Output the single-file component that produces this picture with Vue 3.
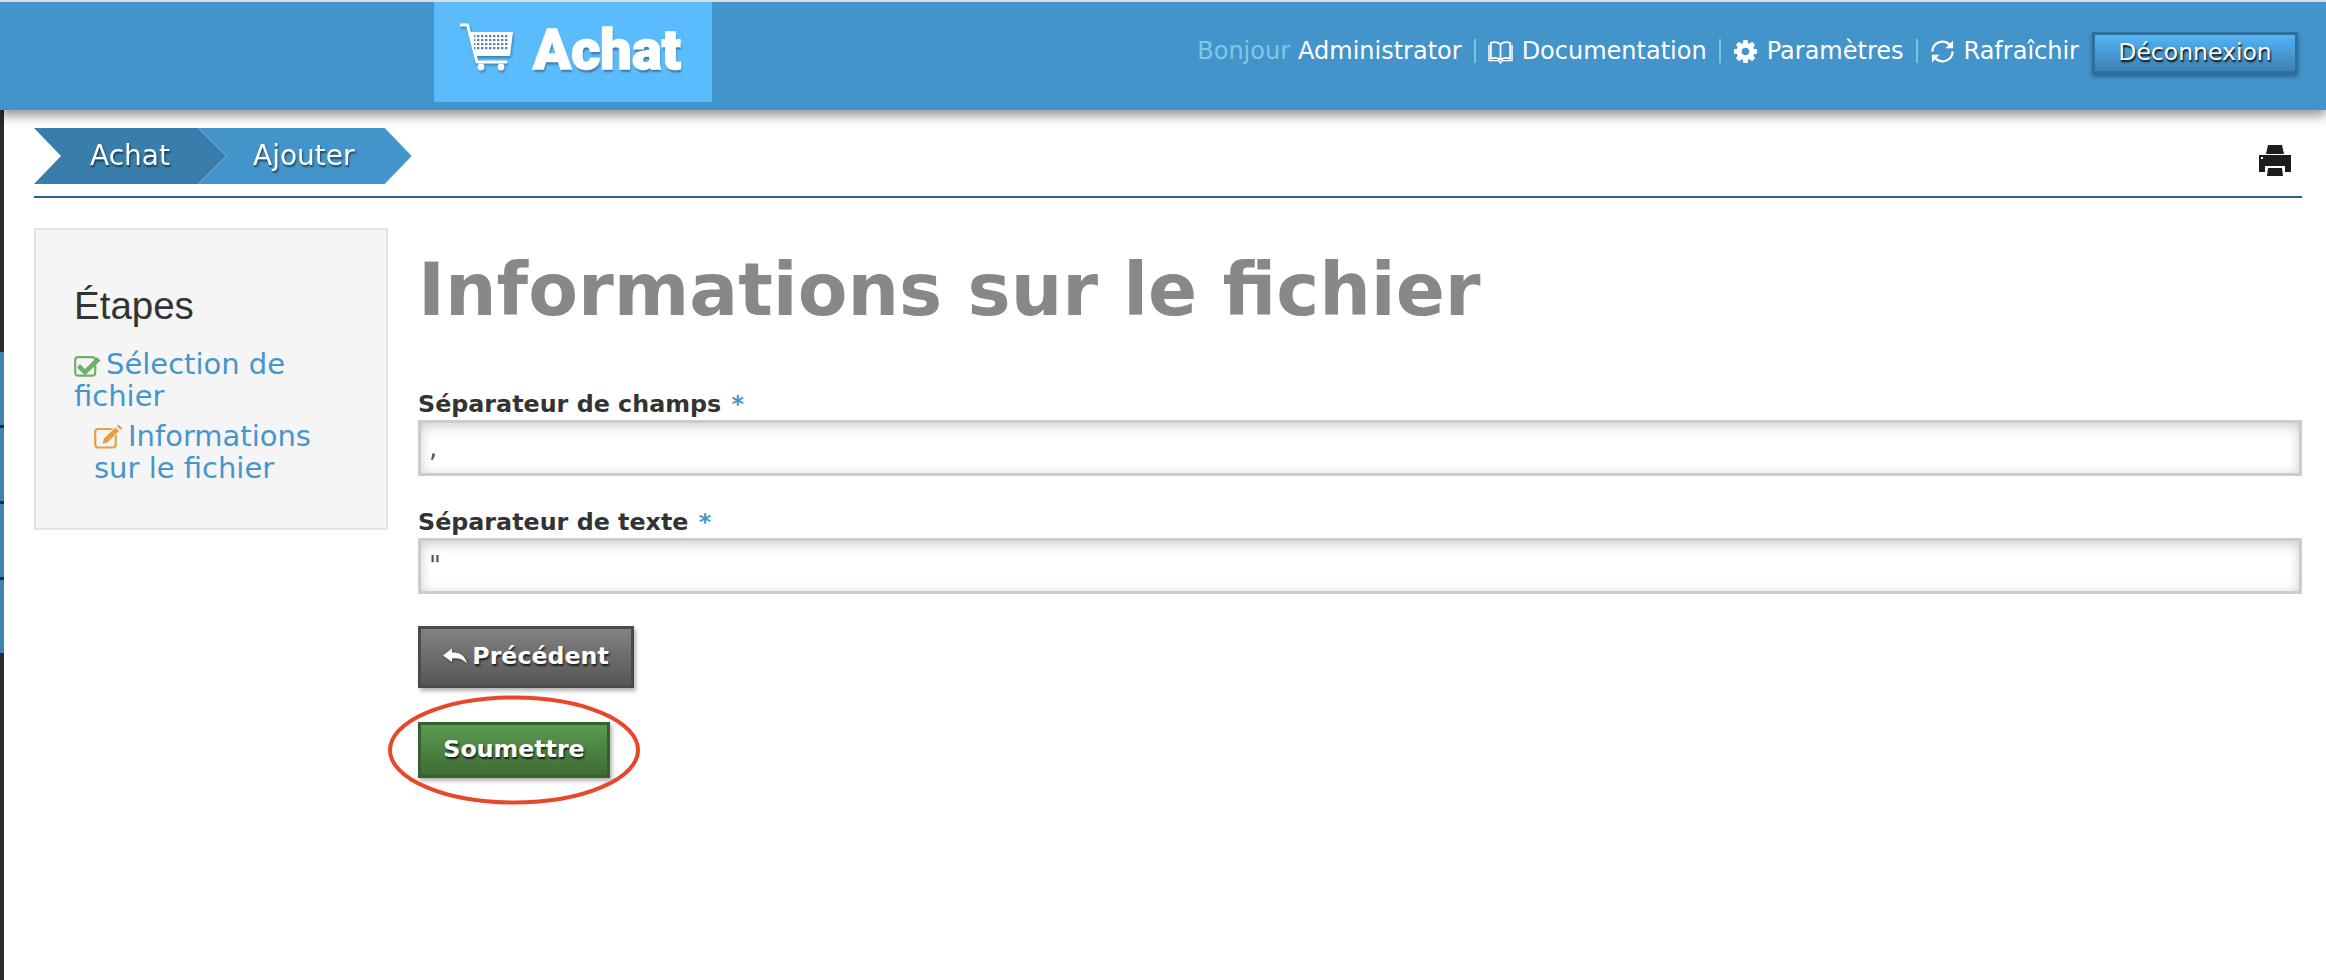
<script setup>
const crumbs = ['Achat', 'Ajouter']
const cog = 'M1152 896q0-106-75-181t-181-75-181 75-75 181 75 181 181 75 181-75 75-181zm512-109v222q0 12-8 23t-20 13l-185 28q-19 54-39 91 35 50 107 138 10 12 10 25t-9 23q-27 37-99 108t-94 71q-12 0-26-9l-138-108q-44 23-91 38-16 136-29 186-7 28-36 28h-222q-14 0-24.5-8.5t-11.5-21.5l-28-184q-49-16-90-37l-141 107q-10 9-25 9-14 0-25-11-126-114-165-168-7-10-7-23 0-12 8-23 15-21 51-66.5t54-70.5q-27-50-41-99l-183-27q-13-2-21-12.5t-8-23.5v-222q0-12 8-23t19-13l186-28q14-46 39-92-40-57-107-138-10-12-10-24 0-10 9-23 26-36 98.5-107.5t94.5-71.5q13 0 26 10l138 107q44-23 91-38 16-136 29-186 7-28 36-28h222q14 0 24.5 8.5t11.5 21.5l28 184q49 16 90 37l142-107q9-9 24-9 13 0 25 10 129 119 165 170 7 8 7 22 0 12-8 23-15 21-51 66.5t-54 70.5q26 50 41 98l183 28q13 2 21 12.5t8 23.5z'
const stripCells = ['dark', 'blue', 'blue', 'blue', 'blue', 'rest']
const fields = [
  { label: 'Séparateur de champs', value: ',' },
  { label: 'Séparateur de texte', value: '"' }
]
</script>

<template>
  <div class="page">
    <header class="topbar">
      <div class="logo">
        <svg class="cart" viewBox="0 0 54 48" width="54" height="48">
          <defs>
            <pattern id="holes" width="4" height="4" patternUnits="userSpaceOnUse" x="13" y="12">
              <rect width="2.4" height="2.2" fill="#4f88ad" />
            </pattern>
          </defs>
          <path d="M1 2H7.5L17 39H46" fill="none" stroke="#fff" stroke-width="3" stroke-linecap="round" stroke-linejoin="round" />
          <path d="M10 9H53L50 33H16Z" fill="#fff" />
          <rect x="14" y="12" width="34" height="16" fill="url(#holes)" />
          <circle cx="21" cy="44" r="3.4" fill="#fff" />
          <circle cx="41" cy="44" r="3.4" fill="#fff" />
        </svg>
        <span class="logo-text">Achat</span>
      </div>
      <nav class="usernav">
        <span class="muted">Bonjour</span>
        <span class="admin">Administrator</span>
        <i class="sep"></i>
        <svg class="nav-ico" viewBox="0 0 26 26" width="25" height="25">
          <path d="M13 5.500C10 3 6 3 3 4V20.500C6 19.500 10 19.500 13 21.500C16 19.500 20 19.500 23 20.500V4C20 3 16 3 13 5.500ZM13 5.500V21.500" fill="none" stroke="#fff" stroke-width="1.800" stroke-linejoin="round" />
          <path d="M1 6V22.500H11L13 25L15 22.500H25V6" fill="none" stroke="#fff" stroke-width="1.500" />
        </svg>
        <span class="link">Documentation</span>
        <i class="sep"></i>
        <svg class="nav-ico cog" viewBox="0 0 1792 1792" width="27" height="27"><path :d="cog" fill="#fff" /></svg>
        <span class="link">Paramètres</span>
        <i class="sep"></i>
        <svg class="nav-ico" viewBox="0 0 26 26" width="25" height="25">
          <path d="M2.500 13A10.500 10.500 0 0 1 21 6.500" fill="none" stroke="#fff" stroke-width="2.400" />
          <path d="M23.500 13A10.500 10.500 0 0 1 5 19.500" fill="none" stroke="#fff" stroke-width="2.400" />
          <path d="M24 1.500V9.500H16Z M2 24.500V16.500H10Z" fill="#fff" />
        </svg>
        <span class="link">Rafraîchir</span>
        <button class="logout" type="button">Déconnexion</button>
      </nav>
    </header>

    <div class="body-row">
      <div class="strip">
        <span v-for="(c, i) in stripCells" :key="i" :class="['cell', c]"></span>
      </div>
      <main class="content">
        <div class="crumb-row">
          <ol class="crumbs">
            <li v-for="c in crumbs" :key="c" class="crumb"><span class="crumb-shape">{{ c }}</span></li>
          </ol>
          <svg class="printer" viewBox="0 0 32 31" width="32" height="31">
            <path d="M9 0H23L25 9H7Z" fill="#1c1c1c" />
            <rect x="0" y="10" width="32" height="17" fill="#1c1c1c" />
            <rect x="2" y="12" width="2" height="2" fill="#fff" />
            <path d="M6 31V21H26V31Z" fill="#fff" />
            <path d="M8 31L9 23H23L24 31Z" fill="#1c1c1c" />
          </svg>
        </div>

        <div class="columns">
          <aside class="steps">
            <h3 class="steps-title">Étapes</h3>
            <a class="step"><svg class="step-ico" viewBox="0 0 27 23" width="27" height="23">
                <rect x="1.200" y="3.200" width="20" height="18.500" rx="3" fill="none" stroke="#72ae6b" stroke-width="2.200" />
                <path d="M6 10L11 15L23 3L26.500 6.500L11 21.500L3 13.500Z" fill="#72ae6b" />
              </svg>Sélection de fichier</a>
            <a class="step sub"><svg class="step-ico" viewBox="0 0 29 25" width="29" height="25">
                <rect x="1.200" y="5" width="20.500" height="18.500" rx="3" fill="none" stroke="#e79f45" stroke-width="2.200" />
                <path d="M9 14L23 0.500L28 5L14 19L8 20Z" fill="#f5f5f5" />
                <path d="M10 14.500L21.500 3.500L25 7L13.500 18.500L8.500 20Z M23 2L24.500 0.500L28.500 4.500L26.500 5.800Z" fill="#e79f45" />
              </svg>Informations sur le fichier</a>
          </aside>

          <section class="form">
            <h1 class="title">Informations sur le fichier</h1>
            <div v-for="f in fields" :key="f.label" class="field">
              <label class="label">{{ f.label }} <span class="star">*</span></label>
              <input class="input" type="text" :value="f.value" />
            </div>
            <div class="actions">
              <button class="btn grey" type="button">
                <svg viewBox="0 0 24 16" width="24" height="16" class="reply"><path d="M0 7.500L9 0.500V4.500C16 4 22 7 24 15.500C20 11 15 9.500 9 10.500V14Z" fill="#fff" /></svg>
                Précédent
              </button>
              <button class="btn green" type="button">Soumettre</button>
              <svg class="ring" viewBox="0 0 252 110" width="252" height="110">
                <ellipse cx="126" cy="55" rx="124" ry="52.500" fill="none" stroke="#e8472a" stroke-width="4" />
              </svg>
            </div>
          </section>
        </div>
      </main>
    </div>
  </div>
</template>

<style>
html, body { margin: 0; background: #fff; }
</style>

<style scoped>
.page {
  width: 2326px;
  height: 980px;
  overflow: hidden;
  display: flex;
  flex-direction: column;
  font-family: "DejaVu Sans", Verdana, sans-serif;
  background: #fff;
}
.topbar {
  position: relative;
  z-index: 2;
  flex: none;
  height: 108px;
  border-top: 2px solid #dcdcdc;
  background: #4394cb;
  box-shadow: 0 6px 10px rgba(0, 0, 0, 0.4);
  display: flex;
  align-items: flex-start;
  padding: 0 28px 0 434px;
  box-sizing: content-box;
}
.logo {
  width: 278px;
  height: 100px;
  background: #5abcfd;
  display: flex;
  align-items: flex-start;
  box-sizing: border-box;
  padding: 21px 0 0 26px;
}
.cart { filter: drop-shadow(1px 2px 1px rgba(0, 0, 0, 0.3)); }
.logo-text {
  margin-left: 19px;
  font-family: Roboto, "Liberation Sans", sans-serif;
  font-weight: 900;
  font-size: 56px;
  line-height: 54px;
  color: #fff;
  -webkit-text-stroke: 1.500px #fff;
  text-shadow: 1px 3px 2px rgba(0, 0, 0, 0.35);
}
.usernav {
  margin-left: auto;
  height: 42px;
  margin-top: 28px;
  display: flex;
  align-items: center;
  font-size: 24px;
  color: #fff;
  white-space: nowrap;
}
.muted { color: #83c6e4; margin-right: 8px; }
.sep {
  width: 2px;
  height: 24px;
  background: #7fc0de;
  margin: 0 12px;
}
.nav-ico { margin-right: 9px; flex: none; }
.nav-ico.cog { margin: 0 8px 0 -1px; }
.logout {
  margin: 4px 0 0 13px;
  width: 206px;
  height: 42px;
  box-sizing: border-box;
  border: 3px solid #2f6f98;
  background: linear-gradient(#54b4f6, #3b80b2);
  box-shadow: 0 3px 4px rgba(0, 0, 0, 0.3);
  color: #fff;
  font: 23.500px "DejaVu Sans", Verdana, sans-serif;
  text-shadow: 1px 2px 2px #000;
  padding: 0 0 2px;
}
.body-row {
  flex: 1;
  display: flex;
  min-height: 0;
}
.strip {
  flex: none;
  width: 4px;
  display: flex;
  flex-direction: column;
  gap: 3px;
  background: #2b2b2b;
}
.cell { display: block; height: 73px; }
.cell.blue { background: #3b84b3; }
.cell.dark { height: 239px; }
.cell.rest { height: 320px; }
.content {
  flex: 1;
  min-width: 0;
  padding: 18px 24px 0 30px;
}
.crumb-row {
  display: flex;
  justify-content: space-between;
  padding-bottom: 12px;
  border-bottom: 2px solid #2a6282;
}
.crumbs {
  display: flex;
  list-style: none;
  margin: 0;
  padding: 0;
}
.crumb { filter: drop-shadow(1px 0 0 #82b5d6); position: relative; }
.crumb:first-child { z-index: 1; }
.crumb + .crumb { margin-left: -28px; }
.crumb-shape {
  display: block;
  height: 56px;
  line-height: 56px;
  font-size: 28px;
  color: #fff;
  text-shadow: 1px 2px 2px rgba(0, 0, 0, 0.55);
  background: #387dab;
  box-sizing: border-box;
  width: 192px;
  padding-left: 56px;
  clip-path: polygon(0 0, 164px 0, 192px 50%, 164px 100%, 0 100%, 27px 50%);
}
.crumb + .crumb .crumb-shape {
  background: #4394cb;
  width: 213px;
  padding-left: 55px;
  clip-path: polygon(0 0, 186px 0, 213px 50%, 186px 100%, 0 100%, 0 50%);
}
.printer { margin: 17px 11px 0 0; }
.columns {
  display: grid;
  grid-template-columns: 354px 1fr;
  column-gap: 30px;
  align-items: start;
  margin-top: 30px;
}
.steps {
  box-sizing: border-box;
  height: 302px;
  border: 2px solid #e3e3e3;
  background: #f5f5f5;
  padding: 54px 38px 0;
  font-size: 29px;
  line-height: 32px;
  color: #4596cc;
}
.steps-title {
  margin: 0 0 20px;
  font: 400 38.500px/44px "Liberation Sans", Arial, sans-serif;
  color: #333;
}
.step { display: block; }
.step.sub { margin: 8px 0 0 20px; }
.step-ico { vertical-align: -3px; margin-right: 5px; }
.title {
  margin: 17px 0 54px;
  font-size: 72.500px;
  line-height: 90px;
  font-weight: 700;
  color: #888;
  white-space: nowrap;
}
.field { margin-bottom: 31px; }
.label {
  display: block;
  font-size: 23.800px;
  line-height: 30px;
  font-weight: 700;
  color: #333;
  margin-bottom: 1px;
}
.star { color: #4596cc; margin-left: 2px; }
.input {
  display: block;
  width: 100%;
  height: 56px;
  box-sizing: border-box;
  border: 3px solid #ccc;
  background: #fff;
  box-shadow: inset 0 6px 12px rgba(0, 0, 0, 0.1), inset 0 0 12px rgba(0, 0, 0, 0.1);
  padding: 0 8px;
  font: 26px "DejaVu Sans", Verdana, sans-serif;
  color: #555;
  outline: none;
}
.actions {
  position: relative;
  margin-top: 32px;
  display: flex;
  flex-direction: column;
  align-items: flex-start;
  gap: 34px;
}
.btn {
  box-sizing: border-box;
  border: 3px solid;
  color: #fff;
  font: 700 23.700px "DejaVu Sans", Verdana, sans-serif;
  text-shadow: 1px 2px 2px rgba(0, 0, 0, 0.75);
  box-shadow: 2px 3px 4px rgba(0, 0, 0, 0.3);
  padding: 0 0 3px;
  display: flex;
  align-items: center;
  justify-content: center;
}
.btn.grey {
  width: 216px;
  height: 62px;
  border-color: #4a4a4a;
  background: linear-gradient(#828282, #565656);
}
.btn.green {
  width: 192px;
  height: 56px;
  border-color: #38602f;
  background: linear-gradient(#5a9a50, #3f6b36);
}
.reply { margin-right: 5px; filter: drop-shadow(1px 1px 1px rgba(0, 0, 0, 0.5)); }
.ring {
  position: absolute;
  left: -30px;
  top: 69px;
  pointer-events: none;
}
</style>
